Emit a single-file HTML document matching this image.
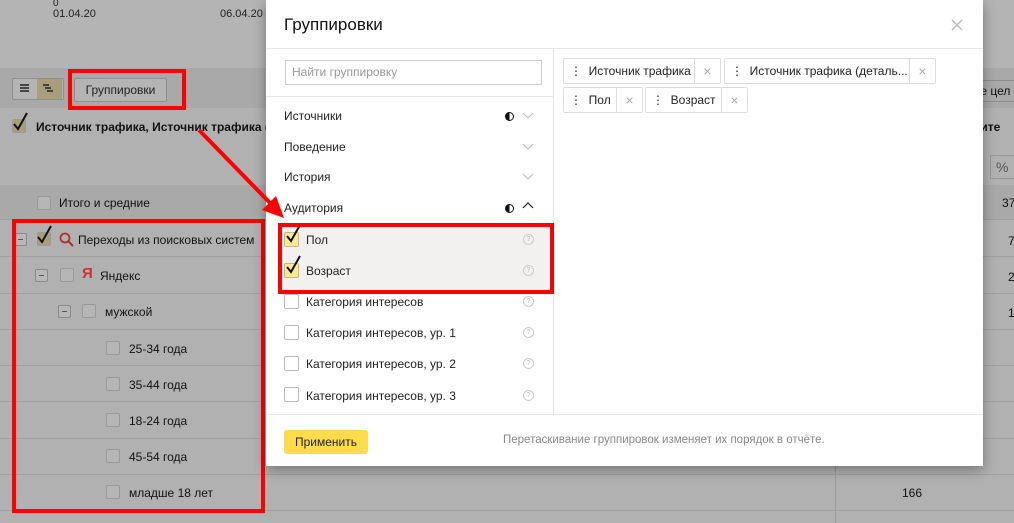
<!DOCTYPE html>
<html><head><meta charset="utf-8"><style>
body{margin:0;width:1014px;height:523px;overflow:hidden;position:relative;background:#b1b1b1;font-family:"Liberation Sans",Arial,sans-serif;font-size:12px;color:#111}
.a{position:absolute}
.cb{position:absolute;width:12px;height:12px;border:1px solid #999;border-radius:2px;background:#b6b6b6}
.hl{position:absolute;left:0;width:1014px;height:1px;background:#a0a0a0}
.min{position:absolute;width:11px;height:11px;border:1px solid #8a8a8a;border-radius:2px;background:#b8b8b8}
.min:after{content:"";position:absolute;left:3px;top:5px;width:5px;height:1px;background:#555}
.modal{position:absolute;left:266px;top:0;width:717px;height:466px;background:#fff;box-shadow:0 4px 12px rgba(0,0,0,.35)}
.it{position:absolute;left:18px;font-size:12px;color:#222}
.q{position:absolute;left:257px;width:9px;height:9px;border:1px solid #ccc;border-radius:50%;font-size:7px;color:#bbb;text-align:center;line-height:9px}
.mcb{position:absolute;left:18px;width:13px;height:13px;border:1px solid #bbb;border-radius:2px;background:#fff}
.tag{position:absolute;height:24px;border:1px solid #ddd;border-radius:2px;font-size:12px;line-height:24px;color:#222;white-space:nowrap}
.tag .x{position:absolute;right:0;top:0;width:25px;height:24px;border-left:1px solid #ddd;color:#aaa;text-align:center;font-size:14px;background:#fff}
.red{position:absolute;border:4px solid #f00}
.half{position:absolute;width:7px;height:7px;border:1px solid #111;border-radius:50%;background:linear-gradient(90deg,#111 50%,#fff 50%)}
.chk{position:absolute}
</style></head><body>
<div class="a" style="left:0;top:0;width:1014px;height:68px;background:#b4b4b4"></div>
<div class="a" style="left:0;top:68px;width:1014px;height:40px;background:#a9a9a9"></div>
<div class="a" style="left:0;top:185px;width:1014px;height:35px;background:#a9a9a9"></div>
<div class="a" style="left:53px;top:-2px;font-size:10px;color:#222">0</div>
<div class="a" style="left:53px;top:8px;font-size:11px;color:#222">01.04.20</div>
<div class="a" style="left:220px;top:8px;font-size:11px;color:#222">06.04.20</div>
<div class="a" style="left:12px;top:78px;width:50px;height:20px;border:1px solid #8f8f8f;border-radius:2px;background:#b4b4b4"></div>
<div class="a" style="left:37px;top:79px;width:25px;height:20px;background:#a89f7a"></div>
<svg class="a" style="left:18px;top:83px" width="44" height="12"><g stroke="#222" stroke-width="1.5"><line x1="2" y1="2" x2="11" y2="2"/><line x1="2" y1="5" x2="11" y2="5"/><line x1="2" y1="8" x2="11" y2="8"/><line x1="25" y1="2" x2="31" y2="2"/><line x1="27" y1="5" x2="33" y2="5"/><line x1="29" y1="8" x2="35" y2="8"/></g></svg>
<div class="a" style="left:74px;top:78px;width:91px;height:22px;border:1px solid #8f8f8f;border-radius:2px;background:#b4b4b4;text-align:center;line-height:22px;font-size:12px;color:#222">Группировки</div>
<div class="red" style="left:68px;top:69px;width:110px;height:33px"></div>
<div class="cb" style="left:12px;top:119px;background:#a89f7a"></div>
<svg class="chk" style="left:12px;top:110px" width="18" height="22"><path d="M2 14 L6 19 L15 3" stroke="#111" stroke-width="2" fill="none"/></svg>
<div class="a" style="left:36px;top:120px;font-weight:bold;font-size:12px;color:#111">Источник трафика, Источник трафика (д</div>
<div class="a" style="left:968px;top:80px;width:60px;height:20px;border:1px solid #8f8f8f;font-size:12px;line-height:20px;padding-left:6px">те цел</div>
<div class="a" style="left:968px;top:120px;font-weight:bold;font-size:12px">етите</div>
<div class="a" style="left:990px;top:155px;width:24px;height:22px;border:1px solid #999;font-size:14px;line-height:22px;padding-left:5px;color:#555">%</div>
<div class="a" style="left:1002px;top:196px">37</div>
<div class="a" style="left:1008px;top:234px">7</div>
<div class="a" style="left:1008px;top:270px">2</div>
<div class="a" style="left:1008px;top:306px">1</div>
<div class="a" style="left:902px;top:486px">166</div>
<div class="a" style="left:835px;top:185px;width:1px;height:338px;background:#9d9d9d"></div>
<div class="hl" style="top:219px"></div><div class="hl" style="top:256px"></div><div class="hl" style="top:293px"></div><div class="hl" style="top:329px"></div><div class="hl" style="top:365px"></div><div class="hl" style="top:401px"></div><div class="hl" style="top:438px"></div><div class="hl" style="top:474px"></div><div class="hl" style="top:510px"></div>
<div class="cb" style="left:37px;top:196px"></div><div class="a" style="left:59px;top:196px">Итого и средние</div>
<div class="min" style="left:14px;top:233px"></div>
<div class="cb" style="left:37px;top:232px;background:#a89f7a"></div>
<svg class="chk" style="left:36px;top:223px" width="18" height="22"><path d="M2 14 L6 19 L15 3" stroke="#111" stroke-width="2" fill="none"/></svg>
<svg class="a" style="left:59px;top:232px" width="16" height="16"><circle cx="6" cy="6" r="4.5" stroke="#b03030" stroke-width="1.8" fill="none"/><line x1="9.5" y1="9.5" x2="14" y2="14" stroke="#b03030" stroke-width="2"/></svg>
<div class="a" style="left:78px;top:233px">Переходы из поисковых систем</div>
<div class="min" style="left:35px;top:269px"></div><div class="cb" style="left:60px;top:268px"></div>
<div class="a" style="left:82px;top:265px;color:#c33;font-weight:bold;font-size:15px">Я</div><div class="a" style="left:100px;top:269px">Яндекс</div>
<div class="min" style="left:58px;top:305px"></div><div class="cb" style="left:82px;top:304px"></div><div class="a" style="left:105px;top:305px">мужской</div>
<div class="cb" style="left:106px;top:341px"></div><div class="a" style="left:129px;top:342px">25-34 года</div>
<div class="cb" style="left:106px;top:377px"></div><div class="a" style="left:129px;top:378px">35-44 года</div>
<div class="cb" style="left:106px;top:413px"></div><div class="a" style="left:129px;top:414px">18-24 года</div>
<div class="cb" style="left:106px;top:449px"></div><div class="a" style="left:129px;top:450px">45-54 года</div>
<div class="cb" style="left:106px;top:485px"></div><div class="a" style="left:129px;top:486px">младше 18 лет</div>
<div class="red" style="left:12px;top:219px;width:245px;height:286px"></div>

<div class="modal">
<div class="a" style="left:18px;top:15px;font-size:17px;color:#111">Группировки</div>
<svg class="a" style="left:685px;top:19px" width="12" height="12"><path d="M1 1L11 11M11 1L1 11" stroke="#bbb" stroke-width="1.5"/></svg>
<div class="a" style="left:0;top:48px;width:717px;height:1px;background:#e8e8e8"></div>
<div class="a" style="left:287px;top:48px;width:1px;height:366px;background:#e8e8e8"></div>
<div class="a" style="left:19px;top:60px;font-size:12px;color:#999;line-height:23px;padding-left:6px;box-sizing:border-box;width:257px;height:25px;border:1px solid #ccc">Найти группировку</div>
<div class="a" style="left:0;top:96px;width:287px;height:1px;background:#e8e8e8"></div>
<div class="it" style="top:109px">Источники</div><div class="half" style="left:239px;top:112px"></div>
<div class="it" style="top:140px">Поведение</div>
<div class="it" style="top:170px">История</div>
<div class="it" style="top:201px">Аудитория</div><div class="half" style="left:239px;top:204px"></div>
<svg class="a" style="left:255px;top:110px" width="14" height="100"><g stroke="#bbb" stroke-width="1" fill="none"><path d="M2 3L7 8L12 3"/><path d="M2 34L7 39L12 34"/><path d="M2 64L7 69L12 64"/></g><path d="M2 100L7 95L12 100" stroke="#222" stroke-width="1.2" fill="none" transform="translate(0,-2)"/></svg>
<div class="a" style="left:14px;top:224px;width:273px;height:66px;background:#f2f1ef"></div>
<div class="mcb" style="top:232px;background:#fde89a;border-color:#c8b97a"></div>
<svg class="chk" style="left:19px;top:222px" width="18" height="22"><path d="M2 14 L6 19 L15 3" stroke="#111" stroke-width="2" fill="none"/></svg>
<div class="it" style="left:40px;top:233px">Пол</div><div class="q" style="top:234px">?</div>
<div class="mcb" style="top:263px;background:#fde89a;border-color:#c8b97a"></div>
<svg class="chk" style="left:19px;top:253px" width="18" height="22"><path d="M2 14 L6 19 L15 3" stroke="#111" stroke-width="2" fill="none"/></svg>
<div class="it" style="left:40px;top:264px">Возраст</div><div class="q" style="top:265px">?</div>
<div class="mcb" style="top:294px"></div><div class="it" style="left:40px;top:295px">Категория интересов</div><div class="q" style="top:296px">?</div>
<div class="mcb" style="top:325px"></div><div class="it" style="left:40px;top:326px">Категория интересов, ур. 1</div><div class="q" style="top:327px">?</div>
<div class="mcb" style="top:356px"></div><div class="it" style="left:40px;top:357px">Категория интересов, ур. 2</div><div class="q" style="top:358px">?</div>
<div class="mcb" style="top:387px"></div><div class="it" style="left:40px;top:389px">Категория интересов, ур. 3</div><div class="q" style="top:390px">?</div>
<div class="red" style="left:12px;top:223px;width:268px;height:63px"></div>
<div class="a" style="left:0;top:414px;width:717px;height:1px;background:#e8e8e8"></div>
<div class="a" style="left:18px;top:430px;width:84px;height:24px;background:#fddc4c;border-radius:3px;text-align:center;line-height:24px;font-size:12px;color:#222">Применить</div>
<div class="a" style="left:237px;top:434px;font-size:11.5px;color:#888">Перетаскивание группировок изменяет их порядок в отчёте.</div>
<div class="tag" style="left:297px;top:58px;width:156px"><span style="padding-left:6px">⋮</span>&nbsp; Источник трафика<div class="x">×</div></div>
<div class="tag" style="left:458px;top:58px;width:210px"><span style="padding-left:6px">⋮</span>&nbsp; Источник трафика (деталь...<div class="x">×</div></div>
<div class="tag" style="left:297px;top:87px;width:78px"><span style="padding-left:6px">⋮</span>&nbsp; Пол<div class="x">×</div></div>
<div class="tag" style="left:379px;top:87px;width:101px"><span style="padding-left:6px">⋮</span>&nbsp; Возраст<div class="x">×</div></div>
</div>
<svg class="a" style="left:0;top:0" width="1014" height="523"><line x1="199" y1="130" x2="272" y2="205" stroke="#f00" stroke-width="4"/><polygon points="284,218 262,210 276,196" fill="#f00"/></svg>
</body></html>
